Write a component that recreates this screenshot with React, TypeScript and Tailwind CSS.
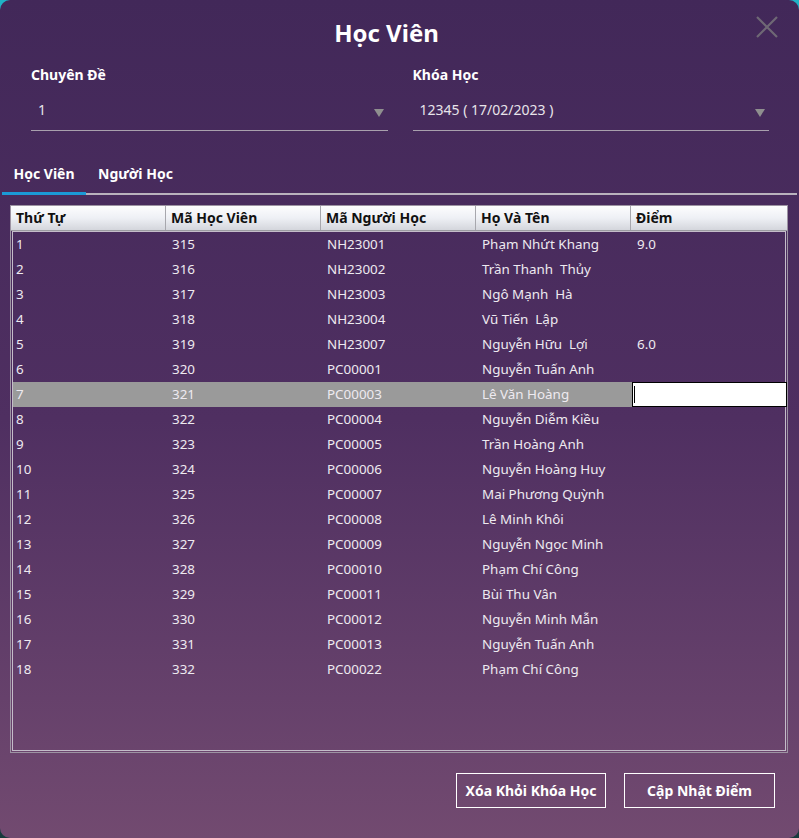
import React from "react";

type Row = {
  stt: string;
  maHV: string;
  maNH: string;
  hoTen: string;
  diem: string;
};

const rows: Row[] = [
  { stt: "1", maHV: "315", maNH: "NH23001", hoTen: "Phạm Nhứt Khang", diem: "9.0" },
  { stt: "2", maHV: "316", maNH: "NH23002", hoTen: "Trần Thanh  Thủy", diem: "" },
  { stt: "3", maHV: "317", maNH: "NH23003", hoTen: "Ngô Mạnh  Hà", diem: "" },
  { stt: "4", maHV: "318", maNH: "NH23004", hoTen: "Vũ Tiến  Lập", diem: "" },
  { stt: "5", maHV: "319", maNH: "NH23007", hoTen: "Nguyễn Hữu  Lợi", diem: "6.0" },
  { stt: "6", maHV: "320", maNH: "PC00001", hoTen: "Nguyễn Tuấn Anh", diem: "" },
  { stt: "7", maHV: "321", maNH: "PC00003", hoTen: "Lê Văn Hoàng", diem: "" },
  { stt: "8", maHV: "322", maNH: "PC00004", hoTen: "Nguyễn Diễm Kiều", diem: "" },
  { stt: "9", maHV: "323", maNH: "PC00005", hoTen: "Trần Hoàng Anh", diem: "" },
  { stt: "10", maHV: "324", maNH: "PC00006", hoTen: "Nguyễn Hoàng Huy", diem: "" },
  { stt: "11", maHV: "325", maNH: "PC00007", hoTen: "Mai Phương Quỳnh", diem: "" },
  { stt: "12", maHV: "326", maNH: "PC00008", hoTen: "Lê Minh Khôi", diem: "" },
  { stt: "13", maHV: "327", maNH: "PC00009", hoTen: "Nguyễn Ngọc Minh", diem: "" },
  { stt: "14", maHV: "328", maNH: "PC00010", hoTen: "Phạm Chí Công", diem: "" },
  { stt: "15", maHV: "329", maNH: "PC00011", hoTen: "Bùi Thu Vân", diem: "" },
  { stt: "16", maHV: "330", maNH: "PC00012", hoTen: "Nguyễn Minh Mẫn", diem: "" },
  { stt: "17", maHV: "331", maNH: "PC00013", hoTen: "Nguyễn Tuấn Anh", diem: "" },
  { stt: "18", maHV: "332", maNH: "PC00022", hoTen: "Phạm Chí Công", diem: "" },
];

const headers = ["Thứ Tự", "Mã Học Viên", "Mã Người Học", "Họ Và Tên", "Điểm"];

function ComboBox({ label, value }: { label: string; value: string }) {
  return (
    <div className="flex flex-col">
      <label className="text-[14px] font-bold text-white leading-[20px] h-[20px]">
        {label}
      </label>
      <div className="mt-[6px] flex items-center justify-between border-b border-[#a8a0ad] h-[40px] pl-[7px] pr-[4px] pb-[3px]">
        <span className="text-[14px] text-[#e8e4ea]">{value}</span>
        <svg width="10" height="8" viewBox="0 0 10 8" className="mt-[7px]">
          <path d="M0 0 H10 L5 8 Z" fill="#8f8f8f" />
        </svg>
      </div>
    </div>
  );
}

export default function App() {
  return (
    <div
      className="w-[799px] h-[838px] bg-gradient-to-b from-[#1fb3c6] via-[#2a6f80] to-[#173a3c] overflow-hidden"
      style={{ fontFamily: '"Noto Sans", "Open Sans", sans-serif' }}
    >
      <div className="relative w-full h-full rounded-[10px] bg-gradient-to-b from-[#422859] via-[#4f2f61] to-[#724a70] flex flex-col">
        {/* close button */}
        <button className="absolute right-[20px] top-[15px] w-[24px] h-[24px]">
          <svg width="24" height="24" viewBox="0 0 24 24">
            <path
              d="M2 2 L22 22 M22 2 L2 22"
              stroke="#6f6875"
              strokeWidth="2.2"
              fill="none"
            />
          </svg>
        </button>

        <h1 className="text-center text-[24px] font-bold text-white mt-[16px] leading-[34px] pr-[26px]">
          Học Viên
        </h1>

        <div className="grid grid-cols-2 gap-[25px] mt-[15px] pl-[31px] pr-[30px]">
          <ComboBox label="Chuyên Đề" value="1" />
          <ComboBox label="Khóa Học" value="12345 ( 17/02/2023 )" />
        </div>

        {/* tabs */}
        <div className="mt-[23px] mx-[2px] flex border-b-2 border-[#b9b2bd]">
          <div className="w-[84px] h-[41px] flex items-center justify-center border-b-[3px] border-[#1b9ad6] -mb-[2px] text-[14px] font-bold text-white">
            Học Viên
          </div>
          <div className="h-[41px] flex items-center pl-[12px] border-b-[3px] border-transparent -mb-[2px] text-[14px] font-bold text-white">
            Người Học
          </div>
        </div>

        {/* table */}
        <div className="mt-[10px] ml-[10px] w-[778px] h-[548px] border border-[#9d94a3] flex flex-col">
          <div className="grid grid-cols-[155px_155px_155px_155px_1fr] h-[25px] bg-gradient-to-b from-[#fdfdfe] via-[#eef0f5] to-[#d4d6dc] border-b border-[#9a9aa0]">
            {headers.map((h, i) => (
              <div
                key={h}
                className={`flex items-center px-[5px] pb-[2px] text-[14px] font-bold text-[#111] ${
                  i < 4 ? "border-r border-[#a7a7ad]" : ""
                }`}
              >
                {h}
              </div>
            ))}
          </div>
          <div className="flex-1 mx-[1px] mb-[1px] border border-[#c4bcc9]">
            {rows.map((r, idx) => {
              const selected = r.stt === "7";
              return (
                <div
                  key={idx}
                  className={`grid grid-cols-[154px_155px_155px_155px_1fr] h-[25px] text-[13.4px] whitespace-pre ${
                    selected ? "bg-[#9a9a9a]" : ""
                  } text-[#eeeaf0]`}
                >
                  <div className="flex items-center px-[3px]">{r.stt}</div>
                  <div className="flex items-center px-[5px]">{r.maHV}</div>
                  <div className="flex items-center px-[5px]">{r.maNH}</div>
                  <div className="flex items-center px-[5px]">{r.hoTen}</div>
                  {selected ? (
                    <div className="flex items-center bg-white border border-black -mr-[2px] pl-[1px]">
                      <span className="w-[1px] h-[17px] bg-black" />
                    </div>
                  ) : (
                    <div className="flex items-center px-[5px]">{r.diem}</div>
                  )}
                </div>
              );
            })}
          </div>
        </div>

        {/* buttons */}
        <div className="flex justify-end gap-[18px] mt-[20px] pr-[24px]">
          <button className="w-[150px] h-[35px] border border-white text-[14px] font-bold text-white">
            Xóa Khỏi Khóa Học
          </button>
          <button className="w-[151px] h-[35px] border border-white text-[14px] font-bold text-white">
            Cập Nhật Điểm
          </button>
        </div>
      </div>
    </div>
  );
}
